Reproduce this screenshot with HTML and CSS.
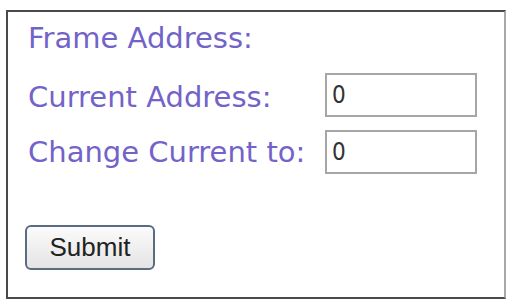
FILE: index.html
```html
<!DOCTYPE html>
<html>
<head>
<meta charset="utf-8">
<link rel="stylesheet" href="styles.css">
</head>
<body>
<form class="box">
  <div class="fields">
    <div class="label title">Frame Address:</div>
    <div class="label shifted">Current Address:</div>
    <input class="field" type="text" value="0">
    <div class="label">Change Current to:</div>
    <input class="field" type="text" value="0">
  </div>
  <button class="submit" type="button">Submit</button>
</form>
</body>
</html>
```

FILE: styles.css
```css
html, body {
  margin: 0;
  padding: 0;
  background: #ffffff;
}

.box {
  box-sizing: border-box;
  width: 500px;
  height: 289px;
  margin: 10px 0 0 6px;
  border: 2px solid #4a4a4a;
  border-right-color: #a8a8a8;
  padding: 4px 0 0 17px;
}

.fields {
  display: grid;
  grid-template-columns: 297px 152px;
  grid-auto-rows: 44px;
  row-gap: 13px;
  align-items: center;
  margin-left: 3px;
}

.label {
  font-family: "DejaVu Sans", sans-serif;
  font-size: 29px;
  line-height: 44px;
  color: #7363c9;
  white-space: nowrap;
}

.shifted {
  padding-top: 3px;
}

.title {
  grid-column: 1 / span 2;
}

.field {
  box-sizing: border-box;
  width: 152px;
  height: 44px;
  margin: 0;
  border: 2px solid #a6a6a6;
  padding: 0 5px;
  font-family: "DejaVu Sans Condensed", "DejaVu Sans", sans-serif;
  font-size: 24px;
  color: #333333;
  background: #ffffff;
  outline: none;
}

.submit {
  display: block;
  box-sizing: border-box;
  width: 130px;
  height: 45px;
  margin-top: 51px;
  border: 2px solid #5b6b82;
  border-radius: 6px;
  background: linear-gradient(#fbfbfb, #e4e4e4);
  font-family: "Liberation Sans", sans-serif;
  font-size: 26px;
  color: #222222;
  padding: 0;
}
```
